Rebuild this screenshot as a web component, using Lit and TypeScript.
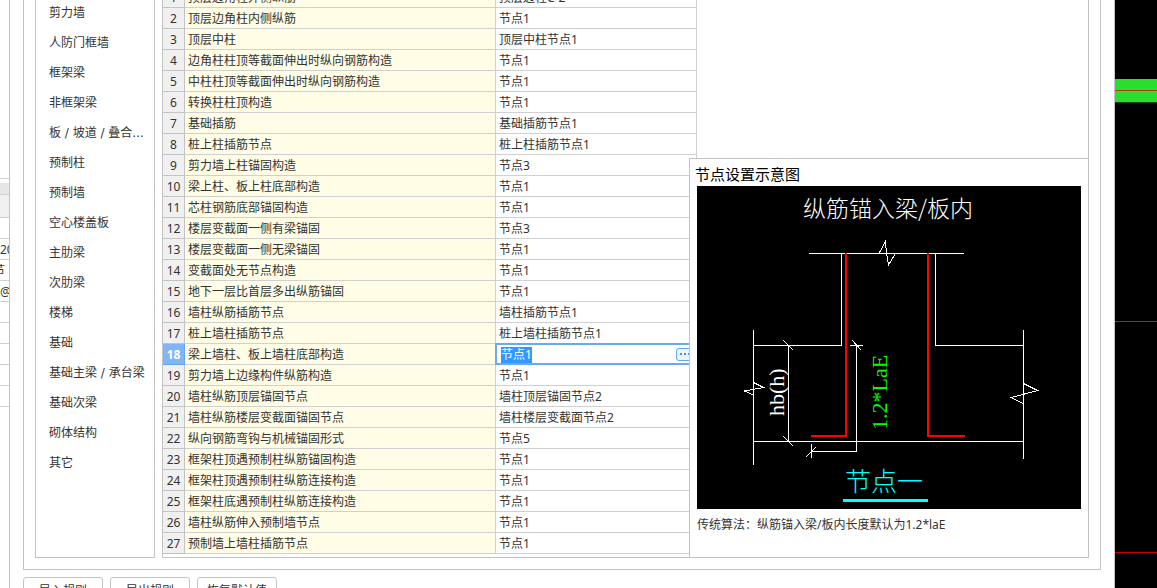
import { LitElement, html, css, svg } from "lit";
import { customElement, state, query } from "lit/decorators.js";
import { classMap } from "lit/directives/class-map.js";

const FONT = css`"Noto Sans", "Noto Sans CJK SC", sans-serif`;

const CATEGORIES = [
  "剪力墙", "人防门框墙", "框架梁", "非框架梁", "板 / 坡道 / 叠合...", "预制柱", "预制墙", "空心楼盖板",
  "主肋梁", "次肋梁", "楼梯", "基础", "基础主梁 / 承台梁", "基础次梁", "砌体结构", "其它",
];

const NODES: [string, string][] = [
  ["顶层边角柱外侧纵筋", "顶层边柱C-2"],
  ["顶层边角柱内侧纵筋", "节点1"],
  ["顶层中柱", "顶层中柱节点1"],
  ["边角柱柱顶等截面伸出时纵向钢筋构造", "节点1"],
  ["中柱柱顶等截面伸出时纵向钢筋构造", "节点1"],
  ["转换柱柱顶构造", "节点1"],
  ["基础插筋", "基础插筋节点1"],
  ["桩上柱插筋节点", "桩上柱插筋节点1"],
  ["剪力墙上柱锚固构造", "节点3"],
  ["梁上柱、板上柱底部构造", "节点1"],
  ["芯柱钢筋底部锚固构造", "节点1"],
  ["楼层变截面一侧有梁锚固", "节点3"],
  ["楼层变截面一侧无梁锚固", "节点1"],
  ["变截面处无节点构造", "节点1"],
  ["地下一层比首层多出纵筋锚固", "节点1"],
  ["墙柱纵筋插筋节点", "墙柱插筋节点1"],
  ["桩上墙柱插筋节点", "桩上墙柱插筋节点1"],
  ["梁上墙柱、板上墙柱底部构造", "节点1"],
  ["剪力墙上边缘构件纵筋构造", "节点1"],
  ["墙柱纵筋顶层锚固节点", "墙柱顶层锚固节点2"],
  ["墙柱纵筋楼层变截面锚固节点", "墙柱楼层变截面节点2"],
  ["纵向钢筋弯钩与机械锚固形式", "节点5"],
  ["框架柱顶遇预制柱纵筋锚固构造", "节点1"],
  ["框架柱顶遇预制柱纵筋连接构造", "节点1"],
  ["框架柱底遇预制柱纵筋连接构造", "节点1"],
  ["墙柱纵筋伸入预制墙节点", "节点1"],
  ["预制墙上墙柱插筋节点", "节点1"],
];

@customElement("node-diagram")
class NodeDiagram extends LitElement {
  static styles = css`
    :host { display: block; background: #000; }
    .drawing { display: block; width: 100%; height: auto; }
    .line { fill: none; stroke: #fff; stroke-width: 1; shape-rendering: crispEdges; }
    .bar { fill: none; stroke: #f00; stroke-width: 2; shape-rendering: crispEdges; }
    .underline { fill: #0ff; shape-rendering: crispEdges; }
    .title { font: 300 23px "Noto Sans CJK SC", sans-serif; fill: #fff; }
    .dim { font: 22px "Liberation Serif", serif; fill: #fff; }
    .anchor { fill: #0f0; }
    .name { font: 300 26px "Noto Sans CJK SC", sans-serif; fill: #0ff; }
  `;

  render() {
    return html`<svg class="drawing" viewBox="0 0 384 323" role="img" aria-label="节点一">
      ${svg`
        <text class="title" x="106" y="31">纵筋锚入梁/板内</text>
        <path class="line" d="M112 67.5H267M182 67.5L188.5 55.5L189.5 67.5L191.5 79L198.5 67.5"/>
        <path class="line" d="M144.5 67V159.5H56M238.5 67V159.5H327"/>
        <path class="line" d="M56.5 144V279M326.5 144V273M56 255.5H327"/>
        <path class="line" d="M56.5 196.5L66.5 201.5L47.5 205L56.5 209M326.5 197.5L340.5 204.5L314.5 211.5L326.5 218"/>
        <path class="line" d="M91.5 159V256M86 154L96 164M86 250L96 260"/>
        <path class="line" d="M153 159.5H166M155 154L164 164M159.5 159V265.5H114M114.5 258V272M109 271L119 261"/>
        <path class="bar" d="M149 67V250H114M231 67V250H268"/>
        <text class="dim" transform="translate(87 230) rotate(-90)">hb(h)</text>
        <text class="dim anchor" transform="translate(190 244) rotate(-90)">1.2*LaE</text>
        <text class="name" x="148" y="305">节点一</text>
        <rect class="underline" x="146" y="313" width="85" height="3"/>
      `}
    </svg>`;
  }
}

@customElement("node-table")
class NodeTable extends LitElement {
  static styles = css`
    :host { display: block; overflow: hidden; }
    .grid { table-layout: fixed; width: 534px; border-spacing: 0; margin-top: -13px; color: #333; font: 12px/16px ${FONT}; }
    .col-no { width: 22px; }
    .col-name { width: 311px; }
    .col-value { width: 201px; }
    .cell { box-sizing: border-box; height: 21px; padding: 2px 3px 0; border: solid #d0d0d0; border-width: 0 1px 1px 0; white-space: nowrap; text-align: left; font-weight: 400; }
    .no { padding: 2px 0 0; background: #f0f0f0; border-color: #c3c3c3; text-align: center; }
    .name { background: #fffde6; }
    .current { background: #80b6f7; border-color: #62a5ec; color: #fff; font-weight: 700; }
    .editing { position: relative; padding: 0; }
    .editor { position: absolute; inset: -1px; display: flex; align-items: center; padding: 0 2px 0 4px; border: 2px solid #6aaae8; background: #fff; }
    .input { flex: 1; min-width: 0; height: 16px; padding: 1px 0 0; border: 0; outline: 0; color: #333; font: inherit; }
    .input::selection { background: #39f; color: #fff; }
    .more { display: flex; align-items: center; justify-content: center; gap: 2px; width: 17px; height: 13px; padding: 0; border: 1px solid #5da6e8; border-radius: 3px; background: #eef3fa; }
    .dot { width: 2px; height: 2px; background: #4a90e2; }
  `;

  @state() private current = 17;
  @query(".input") private input!: HTMLInputElement;

  firstUpdated() {
    this.input.focus({ preventScroll: true });
    this.input.select();
  }

  private value(i: number, value: string) {
    if (i !== this.current) return html`<td class="cell">${value}</td>`;
    return html`<td class="cell editing">
      <div class="editor">
        <input class="input" aria-label=${NODES[i][0]} .value=${value} />
        <button class="more" type="button" aria-label="选择节点"><span class="dot"></span><span class="dot"></span><span class="dot"></span></button>
      </div>
    </td>`;
  }

  render() {
    return html`<table class="grid">
      <colgroup><col class="col-no" /><col class="col-name" /><col class="col-value" /></colgroup>
      <tbody>
        ${NODES.map(([name, value], i) => html`<tr>
          <th scope="row" class=${classMap({ cell: true, no: true, current: i === this.current })}>${i + 1}</th>
          <td class="cell name">${name}</td>
          ${this.value(i, value)}
        </tr>`)}
      </tbody>
    </table>`;
  }
}

@customElement("app-root")
class AppRoot extends LitElement {
  static styles = css`
    :host { display: grid; grid-template-columns: 9px minmax(0, 1fr) 42px; height: 100vh; overflow: hidden; background: #fff; color: #333; font: 12px/16px ${FONT}; }

    .behind { overflow: hidden; padding-top: 178px; }
    .band { box-sizing: border-box; height: 21px; border-bottom: 1px solid #d0d0d0; line-height: 22px; white-space: nowrap; }
    .edge { height: 4px; border-top: 1px solid #d0d0d0; }
    .tab { height: 12px; background: #e6e6e6; }
    .head { height: 23px; background: #f0f0f0; }
    .end { display: flex; justify-content: flex-end; padding-right: 4px; }

    .dialog { display: flex; flex-direction: column; gap: 7px; padding: 0 13px; border: solid #c4c4c4; border-width: 0 1px; min-height: 0; }
    .frame { flex: 1; min-height: 0; display: flex; gap: 7px; padding: 0 11px 11px; border: solid #c4c4c4; border-width: 0 1px 1px; }
    .list { box-sizing: border-box; width: 120px; overflow: hidden; border: solid #c4c4c4; border-width: 0 1px 1px; font-family: "DejaVu Sans", "Noto Sans CJK SC", sans-serif; }
    .items { list-style: none; margin: -2px 0 0; padding: 0 0 0 13px; }
    .item { display: block; line-height: 30px; white-space: nowrap; color: inherit; text-decoration: none; }
    .pane { flex: 1; position: relative; display: flex; min-width: 0; border: solid #c4c4c4; border-width: 0 1px 1px; }
    .nodes { flex: 1; min-width: 0; }

    .preview { position: absolute; right: -1px; bottom: -1px; box-sizing: border-box; width: 400px; padding: 3px 7px 24px; border: 1px solid #c4c4c4; background: #fff; }
    .heading { margin: 0 -2px; color: #000; font-size: 15px; line-height: 24px; font-weight: 400; }
    .note { margin: 8px 0 0; }

    .actions { display: flex; gap: 7px; height: 11px; }
    .action { flex: none; box-sizing: border-box; width: 80px; height: 28px; padding: 0; border: 1px solid #c4c4c4; border-radius: 3px; background: #fff; color: inherit; font: inherit; }

    .canvas { background: #000; }
    .model { display: block; width: 100%; height: 588px; }
    .slab { fill: #2bdd2d; }
    .shade { fill: #0d400d; }
    .axis { fill: #f00; }
    .dark { fill: #c40000; }
    .over { fill: #c03a10; }
  `;

  render() {
    return html`
      <div class="behind">
        <div class="edge"></div>
        <div class="band tab"></div>
        <div class="band head"></div>
        <div class="band"></div>
        <div class="band">20</div>
        <div class="band end">节</div>
        <div class="band">@</div>
        ${[1, 2, 3, 4, 5].map(() => html`<div class="band"></div>`)}
      </div>
      <main class="dialog">
        <section class="frame">
          <nav class="list">
            <ul class="items">
              ${CATEGORIES.map((c) => html`<li><a class="item" href="#">${c}</a></li>`)}
            </ul>
          </nav>
          <div class="pane">
            <node-table class="nodes"></node-table>
            <aside class="preview">
              <h2 class="heading">节点设置示意图</h2>
              <node-diagram></node-diagram>
              <p class="note">传统算法：纵筋锚入梁/板内长度默认为1.2*laE</p>
            </aside>
          </div>
        </section>
        <footer class="actions">
          <button class="action" type="button">导入规则</button>
          <button class="action" type="button">导出规则</button>
          <button class="action" type="button">恢复默认值</button>
        </footer>
      </main>
      <div class="canvas">
        <svg class="model" viewBox="0 0 42 588" preserveAspectRatio="none" shape-rendering="crispEdges" aria-hidden="true">
          <rect class="slab" y="79" width="42" height="23" />
          <rect class="over" y="90" width="42" height="1" />
          <rect class="shade" y="102" width="42" height="1" />
          <rect class="axis" y="321" width="42" height="1" />
          <rect class="dark" y="552" width="42" height="1" />
        </svg>
      </div>
    `;
  }
}
